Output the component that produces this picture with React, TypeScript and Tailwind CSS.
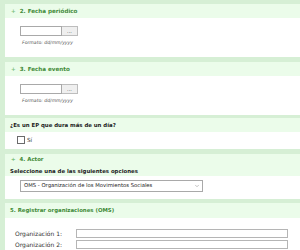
import { ChevronDown } from 'lucide-react';

function Header({ children }: { children: React.ReactNode }) {
  return (
    <div className="flex h-[14px] items-center bg-[#ebfcea] pl-[6px] text-[5.6px] font-bold text-[#3f8a38]">
      <span className="mr-[4px] text-[#7cc07a]">+</span>
      {children}
    </div>
  );
}

function DateField() {
  return (
    <div className="flex flex-col pl-[15px] pt-[8px]">
      <div className="flex h-[10px]">
        <div className="h-full w-[42px] border border-[#a9a9a9] bg-white" />
        <div className="flex h-full w-[16px] items-center justify-center border border-l-0 border-[#bdbdbd] bg-[#efefef] text-[5px] leading-none text-[#333]">
          ...
        </div>
      </div>
      <div className="mt-[4px] pl-[2px] text-[4.6px] italic text-[#555]">Formato: dd/mm/yyyy</div>
    </div>
  );
}

export default function App() {
  return (
    <div
      className="flex h-[250px] w-[300px] flex-col overflow-hidden bg-[#d6efd5] pl-[5px] pt-[4px]"
      style={{ fontFamily: '"DejaVu Sans", Verdana, sans-serif' }}
    >
      {/* 2. Fecha periódico */}
      <section className="h-[53px] bg-white">
        <Header>2. Fecha periódico</Header>
        <DateField />
      </section>

      {/* 3. Fecha evento */}
      <section className="mt-[5px] h-[53px] bg-white">
        <Header>3. Fecha evento</Header>
        <DateField />
      </section>

      {/* multi-day */}
      <section className="mt-[3px] h-[31px] bg-white">
        <div className="flex h-[14px] items-center bg-[#ebfcea] pl-[5px] text-[5.4px] font-bold text-[#222]">
          ¿Es un EP que dura más de un día?
        </div>
        <label className="flex items-center gap-[2px] pl-[12px] pt-[4px] text-[5.6px] text-[#333]">
          <span className="h-[8px] w-[8px] border border-[#6b6b6b] bg-white" />
          Sí
        </label>
      </section>

      {/* 4. Actor */}
      <section className="mt-[5px] h-[45px] bg-white">
        <div className="flex h-[22px] flex-col justify-center bg-[#ebfcea] pl-[5px] text-[5.4px] font-bold">
          <div className="pl-[1px] text-[#3f8a38]">
            <span className="mr-[4px] text-[#7cc07a]">+</span>4. Actor
          </div>
          <div className="mt-[3px] text-[#222]">Seleccione una de las siguientes opciones</div>
        </div>
        <div className="pl-[15px] pt-[4px]">
          <div className="flex h-[12px] w-[183px] items-center justify-between border border-[#a9a9a9] bg-white pl-[3px] pr-[2px] text-[5.3px] text-[#222]">
            OMS - Organización de los Movimientos Sociales
            <ChevronDown size={6} className="text-[#888]" />
          </div>
        </div>
      </section>

      {/* 5. Registrar organizaciones */}
      <section className="mt-[4px] flex-1 bg-white">
        <div className="flex h-[15px] items-center bg-[#ebfcea] pl-[5px] text-[5.4px] font-bold text-[#3f8a38]">
          5. Registrar organizaciones (OMS)
        </div>
        <div className="flex flex-col gap-[1px] pl-[10px] pt-[10px] text-[6px] text-[#333]">
          {['Organización 1:', 'Organización 2:'].map((l) => (
            <div key={l} className="flex h-[10px] items-center">
              <span className="w-[61px]">{l}</span>
              <div className="h-[9px] w-[212px] border border-[#b5b5b5] bg-white" />
            </div>
          ))}
        </div>
      </section>
    </div>
  );
}
